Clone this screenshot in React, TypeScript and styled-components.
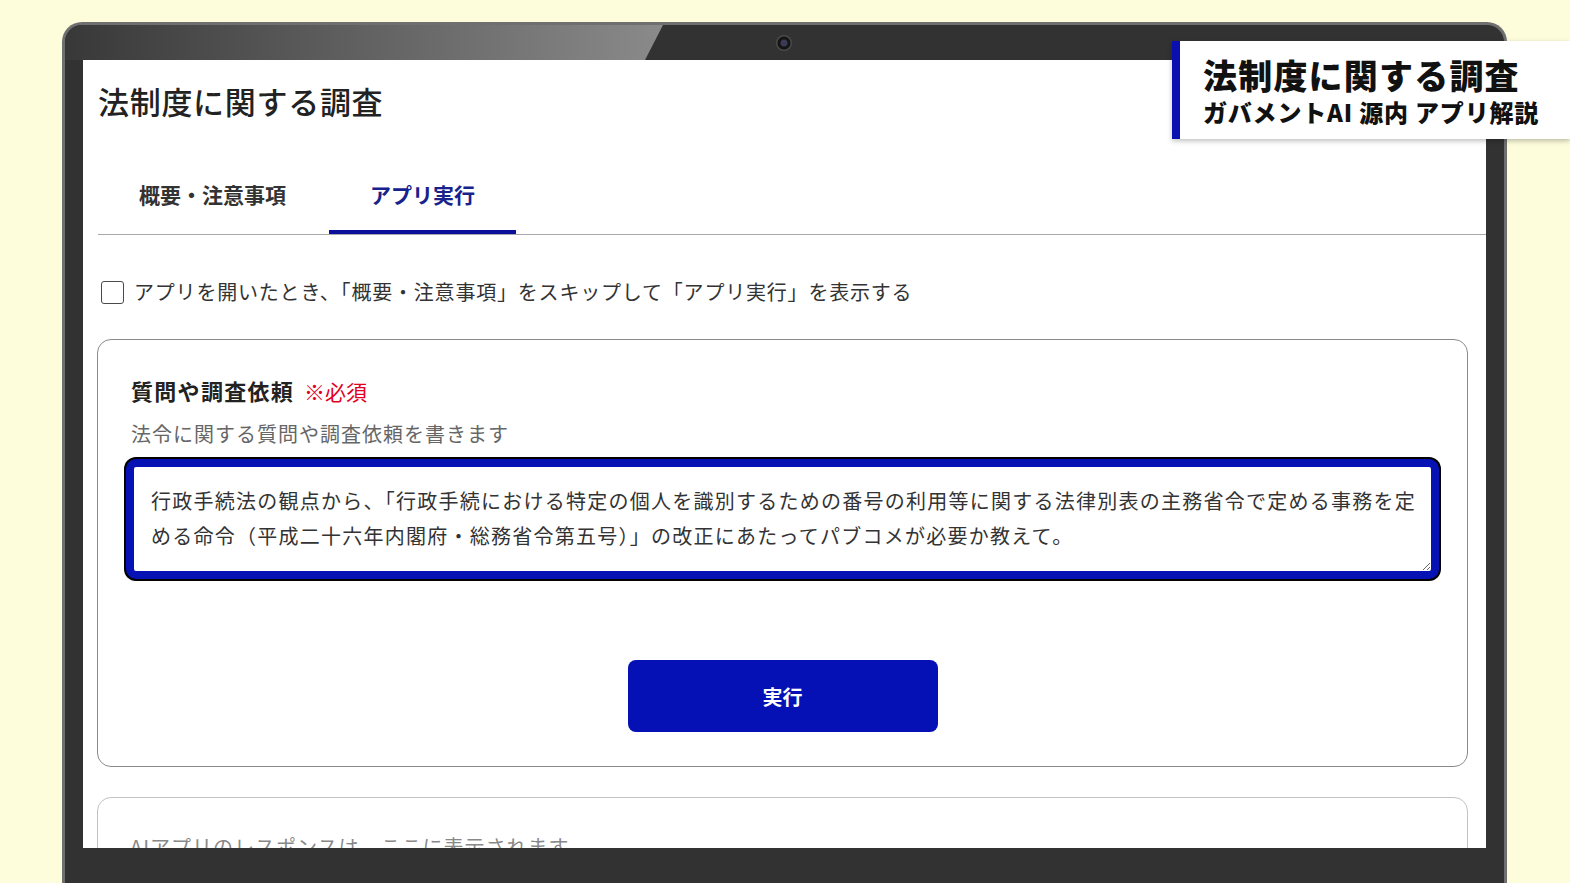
import styled, { createGlobalStyle } from 'styled-components';

const GlobalStyle = createGlobalStyle`
  html, body {
    margin: 0;
    padding: 0;
    background: #fdfcdb;
  }
  body {
    font-family: 'Noto Sans CJK JP', 'Noto Sans', sans-serif;
    color: #333;
  }
`;

const QUESTION =
  '行政手続法の観点から、「行政手続における特定の個人を識別するための番号の利用等に関する法律別表の主務省令で定める事務を定める命令（平成二十六年内閣府・総務省令第五号）」の改正にあたってパブコメが必要か教えて。';

function App() {
  return (
    <Page>
      <GlobalStyle />
      <Laptop>
        <Glare />
        <Camera />
        <Screen>
          <PageTitle>法制度に関する調査</PageTitle>
          <TabList>
            <Tab type='button'>概要・注意事項</Tab>
            <Tab type='button' $active>
              アプリ実行
            </Tab>
          </TabList>
          <SkipRow>
            <Check type='checkbox' />
            アプリを開いたとき、「概要・注意事項」をスキップして「アプリ実行」を表示する
          </SkipRow>
          <Card>
            <FieldLabel>
              質問や調査依頼<Required>※必須</Required>
            </FieldLabel>
            <FieldHint>法令に関する質問や調査依頼を書きます</FieldHint>
            <Question defaultValue={QUESTION} />
            <RunButton type='button'>実行</RunButton>
          </Card>
          <Card $muted>
            <Placeholder>AIアプリのレスポンスは、ここに表示されます</Placeholder>
          </Card>
        </Screen>
      </Laptop>
      <Caption>
        <CaptionTitle>法制度に関する調査</CaptionTitle>
        <CaptionSub>ガバメントAI 源内 アプリ解説</CaptionSub>
      </Caption>
    </Page>
  );
}

export default App;

const Page = styled.div`
  position: relative;
  width: 1570px;
  height: 883px;
  overflow: hidden;
  padding: 22px 0 0 62px;
  box-sizing: border-box;
`;

const Laptop = styled.div`
  position: relative;
  width: 1445px;
  height: 920px;
  box-sizing: border-box;
  padding: 35px 18px 0;
  background: #323232;
  border: 3px solid #6f6f6f;
  border-bottom: none;
  border-radius: 20px 20px 0 0;
`;

// light reflection across the upper-left part of the bezel
const Glare = styled.div`
  position: absolute;
  left: 0;
  top: 0;
  width: 598px;
  height: 35px;
  border-top-left-radius: 17px;
  background: linear-gradient(90deg, #383838 0%, #555 35%, #8a8a8a 100%);
  clip-path: polygon(0 0, 100% 0, calc(100% - 18px) 100%, 0 100%);
`;

const Camera = styled.div`
  position: absolute;
  left: 711px;
  top: 10px;
  width: 16px;
  height: 16px;
  border-radius: 50%;
  background: radial-gradient(circle, #3b3b55 0 3px, #151515 4px 6px, #4a4a4a 7px);
`;

const Screen = styled.div`
  height: 788px;
  overflow: hidden;
  background: #fff;
  padding: 19px 0 0 15px;
  box-sizing: border-box;
`;

const PageTitle = styled.h1`
  margin: 0;
  font-size: 31px;
  line-height: 44px;
  font-weight: 500;
  letter-spacing: 0.7px;
  color: #222;
`;

const TabList = styled.div`
  display: flex;
  gap: 2px;
  margin-top: 36px;
  border-bottom: 1.5px solid #a8a8a8;
`;

const Tab = styled.button<{ $active?: boolean }>`
  padding: 20px 41px 21px;
  background: none;
  border: none;
  border-bottom: 4px solid ${(p) => (p.$active ? '#0b0f9c' : 'transparent')};
  font-family: inherit;
  font-size: 21px;
  line-height: 30px;
  font-weight: 700;
  color: ${(p) => (p.$active ? '#17228c' : '#333')};
  cursor: pointer;
`;

const SkipRow = styled.label`
  display: flex;
  align-items: center;
  gap: 10px;
  margin: 42px 0 0 3px;
  font-size: 20px;
  line-height: 30px;
  letter-spacing: 0.8px;
  color: #333;
`;

const Check = styled.input`
  appearance: none;
  margin: 0;
  width: 23px;
  height: 23px;
  border: 1.5px solid #4a4a4a;
  border-radius: 3px;
  background: #fff;
`;

const Card = styled.div<{ $muted?: boolean }>`
  display: flex;
  flex-direction: column;
  margin: ${(p) => (p.$muted ? '30px' : '32px')} 18px 0 -1px;
  padding: ${(p) => (p.$muted ? '34px 32px' : '34px 28px 34px')};
  border: 1.5px solid ${(p) => (p.$muted ? '#c2c2c2' : '#8a8a8a')};
  border-radius: 14px;
`;

const FieldLabel = styled.div`
  font-size: 22px;
  line-height: 32px;
  font-weight: 700;
  letter-spacing: 1.3px;
  color: #222;
  padding-left: 5px;
`;

const Required = styled.span`
  margin-left: 10px;
  font-size: 21px;
  font-weight: 400;
  letter-spacing: 0;
  color: #e2001f;
`;

const FieldHint = styled.div`
  margin-top: 12px;
  padding-left: 5px;
  font-size: 20px;
  line-height: 30px;
  letter-spacing: 1px;
  color: #666;
`;

const Question = styled.textarea`
  margin-top: 10px;
  width: 100%;
  height: 120px;
  box-sizing: border-box;
  padding: 16px 6px 16px 17px;
  border: 8px solid #0612b4;
  border-radius: 10px;
  box-shadow: 0 0 0 2px #000;
  outline: none;
  font-family: inherit;
  font-size: 20px;
  line-height: 35px;
  letter-spacing: 1.25px;
  color: #333;
  resize: vertical;
`;

const RunButton = styled.button`
  align-self: center;
  margin-top: 81px;
  width: 310px;
  height: 72px;
  border: none;
  border-radius: 8px;
  background: #0511b5;
  color: #fff;
  font-family: inherit;
  font-size: 20px;
  font-weight: 700;
  cursor: pointer;
`;

const Placeholder = styled.div`
  font-size: 20px;
  line-height: 30px;
  letter-spacing: 1px;
  color: #888;
`;

const Caption = styled.div`
  position: absolute;
  top: 41px;
  right: 0;
  width: 398px;
  box-sizing: border-box;
  padding: 13px 0 11px 23px;
  background: #fff;
  border-left: 8px solid #0a10b0;
  box-shadow: 0 2px 5px rgba(0, 0, 0, 0.25);
  color: #111;
`;

const CaptionTitle = styled.div`
  font-size: 34px;
  line-height: 42px;
  font-weight: 900;
  letter-spacing: 1.2px;
`;

const CaptionSub = styled.div`
  font-size: 24px;
  line-height: 32px;
  font-weight: 900;
  letter-spacing: 0.8px;
`;
